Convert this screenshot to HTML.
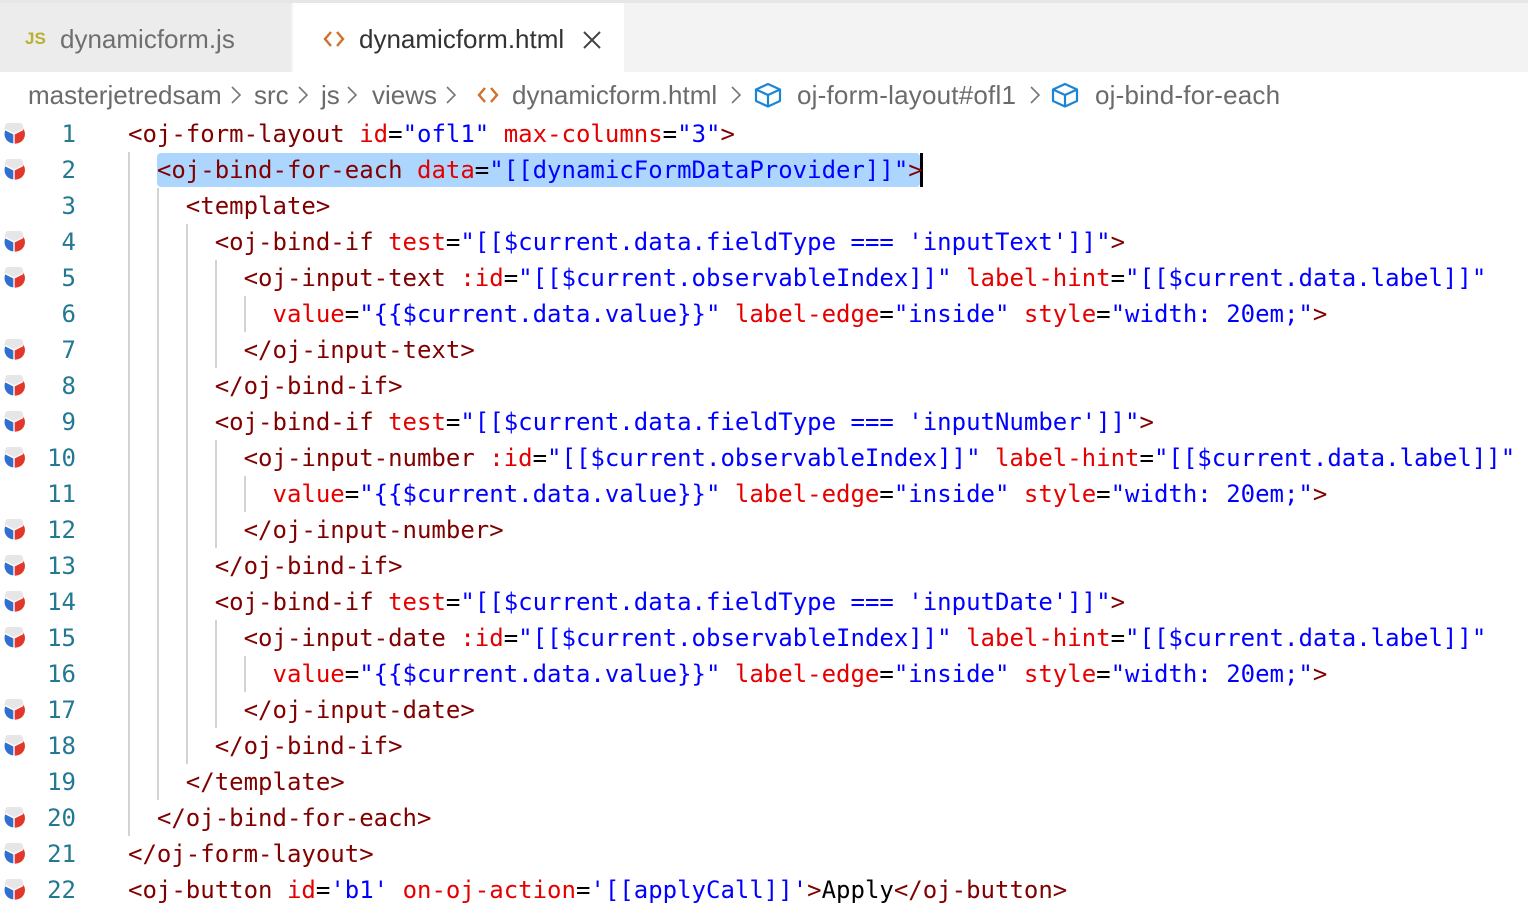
<!DOCTYPE html>
<html><head><meta charset="utf-8"><style>
body{margin:0;width:1528px;height:914px;overflow:hidden;background:#fff;font-family:"Liberation Sans",sans-serif;position:relative}
.tabs{position:absolute;left:0;top:0;width:1528px;height:72px;background:#f3f3f3;border-top:3px solid #e6e6e6;box-sizing:border-box}
.tab{position:absolute;top:0;height:69px;font-size:26px;line-height:72px;box-sizing:border-box}
.t1{left:0;width:292px;background:#ececec;color:#6f6f6f;border-right:1px solid #f3f3f3}
.t2{left:293px;width:331px;background:#fff;color:#333}
.bc{position:absolute;top:75px;left:0;width:1528px;height:40px;font-size:26px;color:#6b6b6b;line-height:40px;white-space:nowrap}
.bc span,.bc svg{position:absolute}
.bc svg.ch{top:9px}
.code{position:absolute;left:0;top:116px;width:1528px}
.ln{position:absolute;height:36px;width:1528px;font-family:"DejaVu Sans Mono","Liberation Mono",monospace;font-size:24px;line-height:36px;white-space:pre}
.num{position:absolute;left:0;width:76px;text-align:right;color:#237893}
.tx{position:absolute;left:128px;color:#000}
.g{color:#800000}.a{color:#e50000}.v{color:#0000ff}
.ic{position:absolute;left:3px;top:7px;width:22px;height:22px}
.guide{position:absolute;width:2px;background:#d3d3d3}
</style></head><body>
<svg width="0" height="0" style="position:absolute"><defs>
<g id="cube"><circle cx="11" cy="11" r="9.5" fill="#2f6fd0"/><path d="M11 11 L20.5 6 A9.5 9.5 0 0 1 11 20.5 Z" fill="#e2382c"/><path d="M1.5 6.5 A9.5 9.5 0 0 1 20.5 6 L11 11 Z" fill="#e6e6e6"/><path d="M11 11 L11 20.5 M11 11 L2 6.5 M11 11 L20 6.5" stroke="#fff" stroke-width="1.4"/></g>
<g id="chev"><path d="M2 3 L10 11 L2 19" fill="none" stroke="#777" stroke-width="1.6"/></g>
<g id="ang"><path d="M8 4 L2 11 L8 18 M14 4 L20 11 L14 18" fill="none" stroke="#d0702a" stroke-width="2.4"/></g>
<g id="box"><path d="M14 2 L26 7.5 L26 19 L14 24.5 L2 19 L2 7.5 Z M2 7.5 L14 13 L26 7.5 M14 13 L14 24.5" fill="none" stroke="#1a85d6" stroke-width="2.2" stroke-linejoin="round"/></g>
</defs></svg>
<div class="tabs">
 <div class="tab t1"><span style="position:absolute;left:25px;top:0;color:#b8b030;font-weight:bold;font-size:17px">JS</span><span style="position:absolute;left:60px">dynamicform.js</span></div>
 <div class="tab t2"><svg width="22" height="22" style="position:absolute;left:30px;top:25px"><use href="#ang"/></svg><span style="position:absolute;left:66px">dynamicform.html</span><svg width="22" height="22" style="position:absolute;left:288px;top:26px"><path d="M3 3 L19 19 M19 3 L3 19" stroke="#444" stroke-width="2"/></svg></div>
</div>
<div class="bc">
<span style="left:28px">masterjetredsam</span><svg class="ch" style="left:230px" width="12" height="22"><use href="#chev"/></svg>
<span style="left:254px">src</span><svg class="ch" style="left:297px" width="12" height="22"><use href="#chev"/></svg>
<span style="left:321px">js</span><svg class="ch" style="left:346px" width="12" height="22"><use href="#chev"/></svg>
<span style="left:372px">views</span><svg class="ch" style="left:445px" width="12" height="22"><use href="#chev"/></svg>
<svg style="left:477px;top:9px" width="22" height="22"><use href="#ang"/></svg>
<span style="left:512px">dynamicform.html</span><svg class="ch" style="left:730px" width="12" height="22"><use href="#chev"/></svg>
<svg style="left:754px;top:7px" width="28" height="26"><use href="#box"/></svg>
<span style="left:797px;letter-spacing:0.2px">oj-form-layout#ofl1</span><svg class="ch" style="left:1029px" width="12" height="22"><use href="#chev"/></svg>
<svg style="left:1051px;top:7px" width="28" height="26"><use href="#box"/></svg>
<span style="left:1095px;letter-spacing:0.2px">oj-bind-for-each</span>
</div>

<div class="code">
<div style="position:absolute;left:157px;top:37px;width:763px;height:34px;background:#add6ff;border-radius:4px"></div>
<div style="position:absolute;left:920px;top:37px;width:3px;height:34px;background:#000"></div>
<div class="guide" style="left:128px;top:36px;height:684px"></div>
<div class="guide" style="left:157px;top:72px;height:612px"></div>
<div class="guide" style="left:186px;top:108px;height:540px"></div>
<div class="guide" style="left:215px;top:144px;height:108px"></div>
<div class="guide" style="left:215px;top:324px;height:108px"></div>
<div class="guide" style="left:215px;top:504px;height:108px"></div>
<div class="guide" style="left:244px;top:180px;height:36px"></div>
<div class="guide" style="left:244px;top:360px;height:36px"></div>
<div class="guide" style="left:244px;top:540px;height:36px"></div>
</div>

<div class="code" id="c">
<div class="ln" style="top:0"><svg class="ic"><use href="#cube"/></svg><span class="num">1</span><span class="tx"><span class="g">&lt;oj-form-layout</span> <span class="a">id</span>=<span class="v">"ofl1"</span> <span class="a">max-columns</span>=<span class="v">"3"</span><span class="g">&gt;</span></span></div>
<div class="ln" style="top:36px"><svg class="ic"><use href="#cube"/></svg><span class="num">2</span><span class="tx">  <span class="g">&lt;oj-bind-for-each</span> <span class="a">data</span>=<span class="v">"[[dynamicFormDataProvider]]"</span><span class="g">&gt;</span></span></div>
<div class="ln" style="top:72px"><span class="num">3</span><span class="tx">    <span class="g">&lt;template&gt;</span></span></div>
<div class="ln" style="top:108px"><svg class="ic"><use href="#cube"/></svg><span class="num">4</span><span class="tx">      <span class="g">&lt;oj-bind-if</span> <span class="a">test</span>=<span class="v">"[[$current.data.fieldType === 'inputText']]"</span><span class="g">&gt;</span></span></div>
<div class="ln" style="top:144px"><svg class="ic"><use href="#cube"/></svg><span class="num">5</span><span class="tx">        <span class="g">&lt;oj-input-text</span> <span class="a">:id</span>=<span class="v">"[[$current.observableIndex]]"</span> <span class="a">label-hint</span>=<span class="v">"[[$current.data.label]]"</span></span></div>
<div class="ln" style="top:180px"><span class="num">6</span><span class="tx">          <span class="a">value</span>=<span class="v">"{{$current.data.value}}"</span> <span class="a">label-edge</span>=<span class="v">"inside"</span> <span class="a">style</span>=<span class="v">"width: 20em;"</span><span class="g">&gt;</span></span></div>
<div class="ln" style="top:216px"><svg class="ic"><use href="#cube"/></svg><span class="num">7</span><span class="tx">        <span class="g">&lt;/oj-input-text&gt;</span></span></div>
<div class="ln" style="top:252px"><svg class="ic"><use href="#cube"/></svg><span class="num">8</span><span class="tx">      <span class="g">&lt;/oj-bind-if&gt;</span></span></div>
<div class="ln" style="top:288px"><svg class="ic"><use href="#cube"/></svg><span class="num">9</span><span class="tx">      <span class="g">&lt;oj-bind-if</span> <span class="a">test</span>=<span class="v">"[[$current.data.fieldType === 'inputNumber']]"</span><span class="g">&gt;</span></span></div>
<div class="ln" style="top:324px"><svg class="ic"><use href="#cube"/></svg><span class="num">10</span><span class="tx">        <span class="g">&lt;oj-input-number</span> <span class="a">:id</span>=<span class="v">"[[$current.observableIndex]]"</span> <span class="a">label-hint</span>=<span class="v">"[[$current.data.label]]"</span></span></div>
<div class="ln" style="top:360px"><span class="num">11</span><span class="tx">          <span class="a">value</span>=<span class="v">"{{$current.data.value}}"</span> <span class="a">label-edge</span>=<span class="v">"inside"</span> <span class="a">style</span>=<span class="v">"width: 20em;"</span><span class="g">&gt;</span></span></div>
<div class="ln" style="top:396px"><svg class="ic"><use href="#cube"/></svg><span class="num">12</span><span class="tx">        <span class="g">&lt;/oj-input-number&gt;</span></span></div>
<div class="ln" style="top:432px"><svg class="ic"><use href="#cube"/></svg><span class="num">13</span><span class="tx">      <span class="g">&lt;/oj-bind-if&gt;</span></span></div>
<div class="ln" style="top:468px"><svg class="ic"><use href="#cube"/></svg><span class="num">14</span><span class="tx">      <span class="g">&lt;oj-bind-if</span> <span class="a">test</span>=<span class="v">"[[$current.data.fieldType === 'inputDate']]"</span><span class="g">&gt;</span></span></div>
<div class="ln" style="top:504px"><svg class="ic"><use href="#cube"/></svg><span class="num">15</span><span class="tx">        <span class="g">&lt;oj-input-date</span> <span class="a">:id</span>=<span class="v">"[[$current.observableIndex]]"</span> <span class="a">label-hint</span>=<span class="v">"[[$current.data.label]]"</span></span></div>
<div class="ln" style="top:540px"><span class="num">16</span><span class="tx">          <span class="a">value</span>=<span class="v">"{{$current.data.value}}"</span> <span class="a">label-edge</span>=<span class="v">"inside"</span> <span class="a">style</span>=<span class="v">"width: 20em;"</span><span class="g">&gt;</span></span></div>
<div class="ln" style="top:576px"><svg class="ic"><use href="#cube"/></svg><span class="num">17</span><span class="tx">        <span class="g">&lt;/oj-input-date&gt;</span></span></div>
<div class="ln" style="top:612px"><svg class="ic"><use href="#cube"/></svg><span class="num">18</span><span class="tx">      <span class="g">&lt;/oj-bind-if&gt;</span></span></div>
<div class="ln" style="top:648px"><span class="num">19</span><span class="tx">    <span class="g">&lt;/template&gt;</span></span></div>
<div class="ln" style="top:684px"><svg class="ic"><use href="#cube"/></svg><span class="num">20</span><span class="tx">  <span class="g">&lt;/oj-bind-for-each&gt;</span></span></div>
<div class="ln" style="top:720px"><svg class="ic"><use href="#cube"/></svg><span class="num">21</span><span class="tx"><span class="g">&lt;/oj-form-layout&gt;</span></span></div>
<div class="ln" style="top:756px"><svg class="ic"><use href="#cube"/></svg><span class="num">22</span><span class="tx"><span class="g">&lt;oj-button</span> <span class="a">id</span>=<span class="v">'b1'</span> <span class="a">on-oj-action</span>=<span class="v">'[[applyCall]]'</span><span class="g">&gt;</span>Apply<span class="g">&lt;/oj-button&gt;</span></span></div>
</div>
</body></html>
